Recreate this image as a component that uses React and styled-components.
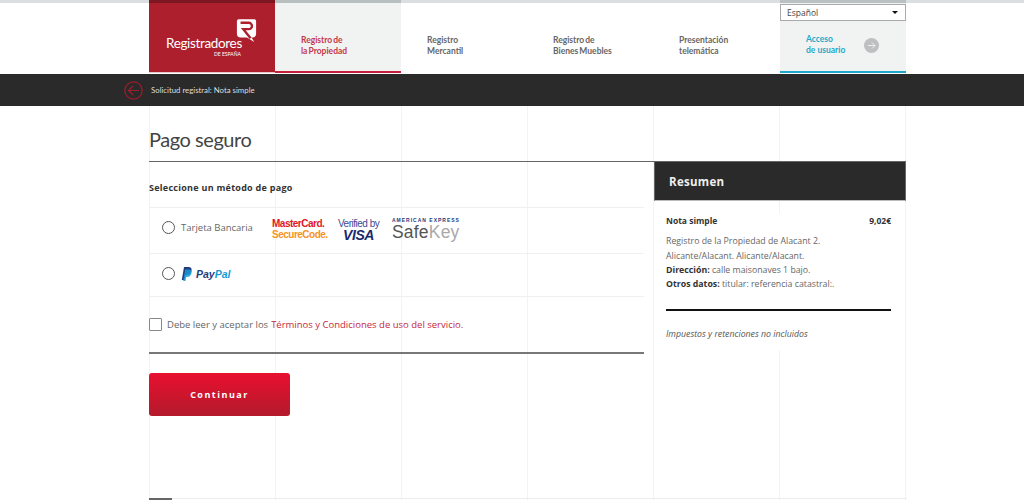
import React from "react";
import styled, { createGlobalStyle } from "styled-components";

const GlobalStyle = createGlobalStyle`
  html, body {
    margin: 0;
    padding: 0;
    background: #fff;
    font-family: "Open Sans", sans-serif;
    color: #555;
  }
  * { box-sizing: border-box; }
`;

const Page = styled.div`
  width: 1024px;
  height: 500px;
  overflow: hidden;
`;
const Wrap = styled.div`
  width: 757px;
  margin-left: 149px;
  display: flex;
`;
const Strip = styled.div`
  height: 3px;
  background: #dcdfdf;
`;
const StripCell = styled.div`
  height: 3px;
  width: ${({ $w }) => $w}px;
  margin-left: ${({ $ml }) => $ml || 0}px;
  background: ${({ $c }) => $c};
`;
const Header = styled(Wrap)`
  height: 70px;
`;
const Logo = styled.a`
  width: 126px;
  height: 70px;
  background: #ae1f2d;
  border-bottom: 1px solid #e9c6ca;
  display: block;
  position: relative;
  color: #fff;
`;
const LogoMark = styled.svg`
  position: absolute;
  left: 87px;
  top: 15px;
`;
const LogoName = styled.span`
  position: absolute;
  left: 17px;
  top: 32px;
  font-family: "Lato", sans-serif;
  font-size: 13.5px;
  line-height: 17px;
  letter-spacing: -0.35px;
`;
const LogoSub = styled.span`
  position: absolute;
  left: 65px;
  top: 48px;
  font-family: "Lato", sans-serif;
  font-size: 5px;
  line-height: 6px;
  white-space: nowrap;
`;
const Tab = styled.a`
  width: 126px;
  height: 70px;
  padding: 32px 0 0 26px;
  font-family: "Lato", sans-serif;
  font-size: 8.5px;
  font-weight: 700;
  line-height: 11px;
  word-spacing: -1px;
  color: ${({ $active }) => ($active ? "#c5384a" : "#666")};
  background: ${({ $active }) => ($active ? "#f1f3f3" : "#fff")};
  border-bottom: 2px solid ${({ $active }) => ($active ? "#c5203a" : "transparent")};
`;
const UserCell = styled.div`
  width: 126px;
  height: 70px;
  margin-left: 1px;
  background: #f1f3f3;
  border-bottom: 2px solid #1fa8c9;
  display: flex;
  flex-direction: column;
`;
const LangSelect = styled.div`
  height: 17px;
  margin-top: 1px;
  background: #fff;
  border: 1px solid #aaa;
  display: flex;
  align-items: center;
  justify-content: space-between;
  padding: 0 7px 0 6px;
  font-size: 8.5px;
  color: #444;
`;
const Caret = styled.span`
  width: 0;
  height: 0;
  border-left: 3px solid transparent;
  border-right: 3px solid transparent;
  border-top: 3px solid #111;
`;
const UserLink = styled.a`
  display: flex;
  align-items: center;
  padding: 13px 0 0 26px;
  font-family: "Lato", sans-serif;
  font-size: 8.5px;
  font-weight: 700;
  line-height: 11px;
  color: #1fa8c9;
  gap: 19px;
`;
const ArrowDisc = styled.span`
  width: 15px;
  height: 15px;
  border-radius: 50%;
  background: #bcc0c0;
  display: flex;
  align-items: center;
  justify-content: center;
`;
const Breadcrumb = styled.div`
  margin-top: 1px;
  height: 32px;
  background: #2a2a2a;
`;
const CrumbRow = styled(Wrap)`
  height: 32px;
  align-items: center;
  gap: 8px;
  transform: translateX(-25px);
  font-family: "Lato", sans-serif;
  font-size: 7.8px;
  color: #ddd;
`;
const Main = styled.div`
  width: 758px;
  margin-left: 149px;
  height: 394px;
  position: relative;
  background: repeating-linear-gradient(to right, #f3f3f3 0 1px, transparent 1px 126px);
`;
const Title = styled.h1`
  margin: 0;
  height: 55px;
  padding-top: 19px;
  font-family: "Lato", sans-serif;
  font-weight: 400;
  font-size: 20px;
  line-height: 28px;
  letter-spacing: -0.45px;
  color: #444;
`;
const Columns = styled.div`
  display: flex;
  align-items: flex-start;
`;
const Left = styled.div`
  width: 505px;
  border-top: 1px solid #666;
`;
const LeftInner = styled.div`
  width: 495px;
`;
const Subtitle = styled.div`
  height: 45px;
  padding-top: 18px;
  font-size: 9px;
  font-weight: 700;
  line-height: 15px;
  letter-spacing: 0.27px;
  color: #333;
`;
const Method = styled.div`
  height: ${({ $h }) => $h}px;
  border-top: 1px solid #f0f0f0;
  padding: 0 0 ${({ $pb }) => $pb}px 13px;
  display: flex;
  align-items: center;
`;
const Radio = styled.span`
  width: 13px;
  height: 13px;
  flex: none;
  border: 1.5px solid #555;
  border-radius: 50%;
  background: #fff;
  margin-right: 6px;
`;
const MethodLabel = styled.span`
  width: 91px;
  font-size: 9.5px;
  color: #666;
`;
const CardLogos = styled.div`
  display: flex;
  align-items: center;
  padding-top: 4px;
`;
const MasterCard = styled.span`
  width: 66px;
  font-family: "Liberation Sans", sans-serif;
  font-weight: 700;
  font-size: 10px;
  line-height: 10.5px;
  letter-spacing: -0.5px;
  color: #e2162b;
  display: block;
`;
const SecureCode = styled.span`
  display: block;
  color: #f7931e;
`;
const VerifiedVisa = styled.span`
  width: 54px;
  font-family: "Liberation Sans", sans-serif;
  font-size: 10px;
  line-height: 10px;
  letter-spacing: -0.5px;
  color: #3b4a94;
  display: block;
`;
const Visa = styled.span`
  display: block;
  font-size: 14px;
  font-weight: 700;
  font-style: italic;
  line-height: 12px;
  letter-spacing: -0.4px;
  color: #1a2a6c;
  padding-left: 5px;
`;
const SafeKey = styled.span`
  display: block;
  font-family: "Liberation Sans", sans-serif;
`;
const Amex = styled.span`
  display: block;
  font-size: 5px;
  font-weight: 700;
  line-height: 5px;
  letter-spacing: 1px;
  color: #1f3a7d;
  white-space: nowrap;
`;
const SafeWord = styled.span`
  display: block;
  font-size: 17.5px;
  line-height: 18px;
  letter-spacing: 0.2px;
  color: #555;
`;
const Key = styled.span`
  color: #a9a9a9;
`;
const PayPalWord = styled.span`
  font-family: "Liberation Sans", sans-serif;
  font-size: 10.5px;
  font-weight: 700;
  font-style: italic;
  color: #253b80;
  margin-left: 4px;
`;
const Pal = styled.span`
  color: #179bd7;
`;
const Terms = styled.div`
  height: 58px;
  border-top: 1px solid #f0f0f0;
  display: flex;
  align-items: center;
  border-bottom: 2px solid #777;
  font-size: 9.5px;
  color: #666;
`;
const Check = styled.span`
  width: 13px;
  height: 13px;
  border: 1px solid #888;
  border-radius: 1px;
  margin-right: 5px;
  background: #fff;
`;
const TermsLink = styled.a`
  color: #c5283d;
  margin-left: 3px;
`;
const Continue = styled.button`
  display: block;
  width: 141px;
  height: 43px;
  margin-top: 19px;
  border: 0;
  border-radius: 3px;
  background: linear-gradient(#e9102f, #b31a2c);
  color: #fff;
  font-family: "Open Sans", sans-serif;
  font-size: 9px;
  font-weight: 700;
  letter-spacing: 1.5px;
`;
const Summary = styled.aside`
  width: 252px;
`;
const SummaryHead = styled.div`
  height: 40px;
  background: #2a2a2a;
  border: 1px solid #666;
  border-bottom-color: #bbb;
  padding-left: 14px;
  display: flex;
  align-items: center;
  font-size: 11.5px;
  font-weight: 700;
  letter-spacing: 0.3px;
  color: #eee;
`;
const SummaryBody = styled.div`
  margin: 12px 1px 0;
  padding: 1px 14px 8px 11px;
  background: #fff;
  font-size: 8.75px;
  line-height: 14.3px;
  color: #666;
`;
const Line = styled.div`
  display: flex;
  justify-content: space-between;
  font-size: 8.5px;
  font-weight: 700;
  color: #333;
  margin-bottom: 6px;
`;
const Strong = styled.b`
  color: #333;
`;
const Divider = styled.hr`
  margin: 18px 0 16px;
  border: 0;
  border-top: 2px solid #111;
`;
const Note = styled.em`
  display: block;
  color: #555;
`;
const FootLine = styled.div`
  position: absolute;
  left: 0;
  right: 0;
  bottom: 1px;
  height: 1px;
  background: #ececec;
`;
const FootMark = styled.div`
  position: absolute;
  left: 0;
  bottom: 0;
  width: 23px;
  height: 2px;
  background: #666;
`;

const nav = [
  ["Registro de", "la Propiedad", true],
  ["Registro", "Mercantil"],
  ["Registro de", "Bienes Muebles"],
  ["Presentación", "telemática"],
];

export default function App() {
  return (
    <Page>
      <GlobalStyle />
      <Strip>
        <Wrap>
          <StripCell $w={126} $c="#7d1721" />
          <StripCell $w={126} $c="#b9c0c0" />
          <StripCell $w={126} $ml={379} $c="#b9c0c0" />
        </Wrap>
      </Strip>
      <Header>
        <Logo>
          <LogoMark width="21" height="26" viewBox="0 0 23 28">
            <path d="M3 1h17a2 2 0 0 1 2 2v14a4 4 0 0 1-4 4h-1l3 5-8-5H5a4 4 0 0 1-4-4V3a2 2 0 0 1 2-2z" fill="#fff" />
            <path d="M5 5h9a3.5 3.5 0 0 1 0 7H8l8 10" fill="none" stroke="#ae1f2d" strokeWidth="2.6" />
          </LogoMark>
          <LogoName>Registradores</LogoName>
          <LogoSub>DE ESPAÑA</LogoSub>
        </Logo>
        {nav.map(([a, b, active]) => (
          <Tab key={a + b} $active={active}>
            {a}
            <br />
            {b}
          </Tab>
        ))}
        <UserCell>
          <LangSelect>
            Español
            <Caret />
          </LangSelect>
          <UserLink>
            <span>
              Acceso
              <br />
              de usuario
            </span>
            <ArrowDisc>
              <svg width="9" height="9" viewBox="0 0 9 9" fill="none" stroke="#eef0f0" strokeWidth="1">
                <path d="M1 4.5h7M5 1.5l3 3-3 3" />
              </svg>
            </ArrowDisc>
          </UserLink>
        </UserCell>
      </Header>
      <Breadcrumb>
        <CrumbRow>
          <svg width="19" height="19" viewBox="0 0 19 19" fill="none" stroke="#a01c2c" strokeWidth="1.2">
            <circle cx="9.5" cy="9.5" r="8.7" />
            <path d="M15 9.5H4.5M9 5l-4.5 4.5L9 14" />
          </svg>
          Solicitud registral: Nota simple
        </CrumbRow>
      </Breadcrumb>
      <Main>
        <Title>Pago seguro</Title>
        <Columns>
          <Left>
            <LeftInner>
              <Subtitle>Seleccione un método de pago</Subtitle>
              <Method $h={46} $pb={6}>
                <Radio />
                <MethodLabel>Tarjeta Bancaria</MethodLabel>
                <CardLogos>
                  <MasterCard>
                    MasterCard.
                    <SecureCode>SecureCode.</SecureCode>
                  </MasterCard>
                  <VerifiedVisa>
                    Verified by
                    <Visa>VISA</Visa>
                  </VerifiedVisa>
                  <SafeKey>
                    <Amex>AMERICAN EXPRESS</Amex>
                    <SafeWord>
                      Safe<Key>Key</Key>
                    </SafeWord>
                  </SafeKey>
                </CardLogos>
              </Method>
              <Method $h={43} $pb={3}>
                <Radio />
                <svg width="11" height="14" viewBox="0 0 11 14">
                  <path d="M3 0h4.5C10 0 11 1.6 10.5 4c-.6 2.7-2.4 4-4.7 4H4.4l-.8 5H.8L3 0z" fill="#253b80" />
                  <path d="M4.2 2.5h4.4c2 .5 2.3 2.2 1.8 4-.6 2.4-2.3 3.6-4.4 3.6h-.9L4.5 14H2.2l2-11.5z" fill="#179bd7" opacity="0.85" />
                </svg>
                <PayPalWord>
                  Pay<Pal>Pal</Pal>
                </PayPalWord>
              </Method>
              <Terms>
                <Check />
                Debe leer y aceptar los
                <TermsLink>Términos y Condiciones de uso del servicio.</TermsLink>
              </Terms>
              <Continue>Continuar</Continue>
            </LeftInner>
          </Left>
          <Summary>
            <SummaryHead>Resumen</SummaryHead>
            <SummaryBody>
              <Line>
                <span>Nota simple</span>
                <span>9,02€</span>
              </Line>
              Registro de la Propiedad de Alacant 2.
              <br />
              Alicante/Alacant. Alicante/Alacant.
              <br />
              <Strong>Dirección:</Strong> calle maisonaves 1 bajo.
              <br />
              <Strong>Otros datos:</Strong> titular: referencia catastral:.
              <Divider />
              <Note>Impuestos y retenciones no incluidos</Note>
            </SummaryBody>
          </Summary>
        </Columns>
        <FootLine />
        <FootMark />
      </Main>
    </Page>
  );
}
